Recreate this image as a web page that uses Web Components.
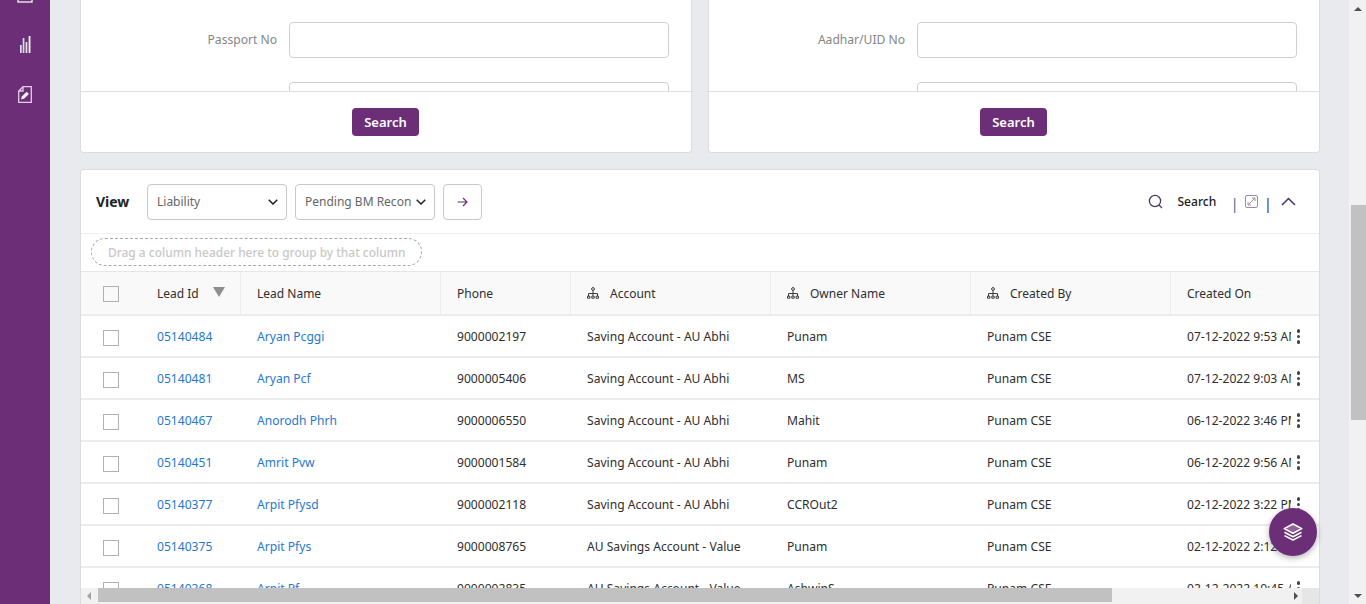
<!DOCTYPE html>
<html lang="en">
<head>
<meta charset="utf-8">
<title>Leads</title>
<style>
  html, body { margin: 0; height: 604px; overflow: hidden; }
  body { font-family: "Noto Sans", "Liberation Sans", sans-serif; font-size: 12px; }
  app-shell { height: 604px; }
</style>
</head>
<body>
<app-shell>
  <search-card label="Passport No"></search-card>
  <search-card label="Aadhar/UID No"></search-card>
  <lead-grid></lead-grid>
</app-shell>

<script>
const FONT = '"Noto Sans", "Liberation Sans", sans-serif';
const PURPLE = '#6c2e77';

const ICONS = {
  report: `<svg width="16" height="3" viewBox="0 0 16 3"><path d="M1 0v2h14V0" fill="none" stroke="#e6dcea" stroke-width="1.5"/></svg>`,
  chart: `<svg width="11" height="17" viewBox="0 0 11 17"><path d="M0 9h1.7v8H0z" fill="#d5e4f7"/><path d="M2.7 2h1.7v15H2.7z" fill="#cfdcf5"/><path d="M5.6 6h1.7v11H5.6z" fill="#f5dfdc"/><path d="M8.6 0h1.9v17H8.6z" fill="#eeeaf8"/></svg>`,
  doc: `<svg width="14" height="17" viewBox="0 0 14 17"><path d="M5 .7h8.3v15.6H.7V5zM5 .7V5H.7" fill="none" stroke="#ddd0e2" stroke-width="1.3"/><path d="M3 13.5l1-3.2 4.6-4.6 2.3 2.3-4.6 4.6z" fill="#f6f0f8"/></svg>`,
  group: `<svg width="12" height="12" viewBox="0 0 12 12" fill="none" stroke="#3a3a3a" stroke-width="1"><circle cx="6" cy="2" r="1.4"/><path d="M6 3.5V7M1.5 9V6.5h9V9M6 7v2"/><path d="M.5 9.2h2.4v2H.5zM4.8 9.2h2.4v2H4.8zM9.1 9.2h2.4v2H9.1z"/></svg>`,
  arrow: `<svg width="11" height="10" viewBox="0 0 11 10" fill="none" stroke="${PURPLE}" stroke-width="1.2"><path d="M.5 5h9.5M6 1l4 4-4 4"/></svg>`,
  chevron: `<svg width="10" height="6" viewBox="0 0 10 6" fill="none" stroke="#222" stroke-width="1.5"><path d="M.7.7L5 5l4.3-4.3"/></svg>`,
  search: `<svg width="15" height="15" viewBox="0 0 15 15" fill="none" stroke="#4a3a6a" stroke-width="1.3"><circle cx="7" cy="7" r="5.6"/><path d="M11 11l3 3"/></svg>`,
  expand: `<svg width="13" height="13" viewBox="0 0 13 13" fill="none"><rect x=".5" y=".5" width="12" height="12" rx="1.5" stroke="#9a8ab4"/><path d="M3 10l7-7M7 3h3v3M3 7v3h3" stroke="#a87d90" stroke-width=".9"/></svg>`,
  up: `<svg width="15" height="9" viewBox="0 0 15 9" fill="none" stroke="#4a2f6d" stroke-width="1.5"><path d="M1 8l6.5-6.5L14 8"/></svg>`,
  layers: `<svg width="20" height="18" viewBox="0 0 20 18" fill="none" stroke="#fff" stroke-width="1.6" stroke-linejoin="round"><path d="M10 1l8.8 4.6L10 10.2 1.2 5.6z" fill="rgba(255,255,255,.25)"/><path d="M1.5 9.3l8.5 4.4 8.5-4.4"/><path d="M1.5 12.6l8.5 4.4 8.5-4.4"/></svg>`,
};

class AppShell extends HTMLElement {
  connectedCallback() {
    if (this.shadowRoot) return;
    const sr = this.attachShadow({ mode: 'open' });
    sr.innerHTML = `
<style>
  :host { display: grid; grid-template-columns: 50px 1fr 17px; height: 604px; background: #e9eaee; overflow: hidden; }
  .side { background: ${PURPLE}; display: flex; flex-direction: column; align-items: center; }
  .side span { display: flex; }
  .i2 { margin-top: 33px; }
  .i3 { margin-top: 33px; }
  main { display: flex; flex-direction: column; gap: 16px; padding: 0 29px 0 30px; min-width: 0; overflow: hidden; }
  .top { display: grid; grid-template-columns: 1fr 1fr; gap: 16px; flex: none; }
  .bar { background: #f1f1f1; display: flex; flex-direction: column; align-items: center; }
  .bar i { border: 4.5px solid transparent; display: block; }
  .bar .u { border-bottom-color: #505050; border-top: 0; margin-top: 7px; }
  .bar .d { border-top-color: #505050; border-bottom: 0; margin: auto 0 6px; }
  .thumb { width: 15px; height: 215px; background: #c1c1c1; margin-top: 194px; align-self: flex-end; }
</style>
<nav class="side">
  <span>${ICONS.report}</span>
  <span class="i2">${ICONS.chart}</span>
  <span class="i3">${ICONS.doc}</span>
</nav>
<main>
  <div class="top"><slot name="cards"></slot></div>
  <slot></slot>
</main>
<aside class="bar"><i class="u"></i><div class="thumb"></div><i class="d"></i></aside>`;
    // the two search cards sit side by side in the top row
    this.querySelectorAll('search-card').forEach(c => c.setAttribute('slot', 'cards'));
  }
}

class SearchCard extends HTMLElement {
  connectedCallback() {
    if (this.shadowRoot) return;
    const sr = this.attachShadow({ mode: 'open' });
    sr.innerHTML = `
<style>
  :host { display: flex; flex-direction: column; height: 153px; box-sizing: border-box; background: #fff; border: 1px solid #dcdcdc; border-top: 0; border-radius: 0 0 4px 4px; font-family: ${FONT}; }
  .body { height: 92px; overflow: hidden; padding: 22px 22px 0 0; box-sizing: border-box; border-bottom: 1px solid #dedede; flex: none; }
  .row { display: grid; grid-template-columns: 196px 1fr; column-gap: 12px; align-items: center; margin-bottom: 24px; }
  label { text-align: right; color: #858585; font-size: 12.1px; padding-bottom: 2px; }
  .inp { height: 36px; box-sizing: border-box; border: 1px solid #cfcfcf; border-radius: 4px; background: #fff; }
  .foot { flex: 1; display: flex; align-items: center; justify-content: center; }
  button { width: 67px; height: 28px; border: 0; border-radius: 4px; background: ${PURPLE}; color: #fff; font: 600 13px ${FONT}; padding: 0; margin-right: 1px; }
</style>
<div class="body">
  <div class="row"><label>${this.getAttribute('label')}</label><div class="inp"></div></div>
  <div class="row"><span></span><div class="inp"></div></div>
</div>
<div class="foot"><button>Search</button></div>`;
  }
}

class LeadGrid extends HTMLElement {
  static COLS = ['60px', '100px', '200px', '130px', '200px', '200px', '200px', '148px'];
  static ROWS = [
    ['05140484', 'Aryan Pcggi', '9000002197', 'Saving Account - AU Abhi', 'Punam', 'Punam CSE', '07-12-2022 9:53 AM'],
    ['05140481', 'Aryan Pcf', '9000005406', 'Saving Account - AU Abhi', 'MS', 'Punam CSE', '07-12-2022 9:03 AM'],
    ['05140467', 'Anorodh Phrh', '9000006550', 'Saving Account - AU Abhi', 'Mahit', 'Punam CSE', '06-12-2022 3:46 PM'],
    ['05140451', 'Amrit Pvw', '9000001584', 'Saving Account - AU Abhi', 'Punam', 'Punam CSE', '06-12-2022 9:56 AM'],
    ['05140377', 'Arpit Pfysd', '9000002118', 'Saving Account - AU Abhi', 'CCROut2', 'Punam CSE', '02-12-2022 3:22 PM'],
    ['05140375', 'Arpit Pfys', '9000008765', 'AU Savings Account - Value', 'Punam', 'Punam CSE', '02-12-2022 2:12 PM'],
    ['05140368', 'Arpit Pf', '9000002835', 'AU Savings Account - Value', 'AshwinS', 'Punam CSE', '02-12-2022 10:45 AM'],
  ];

  connectedCallback() {
    if (this.shadowRoot) return;
    const sr = this.attachShadow({ mode: 'open' });
    const cols = LeadGrid.COLS.join(' ');
    const head = [
      ['Lead Id', false, true], ['Lead Name'], ['Phone'], ['Account', true], ['Owner Name', true], ['Created By', true], ['Created On'],
    ].map(([t, g, s]) => `<div class="th">${g ? `<span class="g">${ICONS.group}</span>` : ''}<span>${t}</span>${s ? '<b class="sort"></b>' : ''}</div>`).join('');
    const rows = LeadGrid.ROWS.map(r => `
  <div class="tr">
    <div class="td c"><span class="cb"></span></div>
    <div class="td link">${r[0]}</div>
    <div class="td link">${r[1]}</div>
    ${r.slice(2, 6).map(v => `<div class="td">${v}</div>`).join('')}
    <div class="td last"><span>${r[6]}</span></div>
    <span class="dots"><i></i><i></i><i></i></span>
  </div>`).join('');
    sr.innerHTML = `
<style>
  :host { display: flex; flex-direction: column; flex: 1; min-height: 0; position: relative; box-sizing: border-box; background: #fff; border: 1px solid #dcdcdc; border-bottom: 0; border-radius: 4px 4px 0 0; font-family: ${FONT}; font-size: 12.1px; color: #2e2e2e; }
  .tools { height: 64px; flex: none; box-sizing: border-box; display: flex; align-items: center; padding: 0 23px 0 15px; border-bottom: 1px solid #f0f0f0; }
  .view { font-weight: 700; font-size: 14px; color: #222; width: 51px; }
  .sel { width: 140px; height: 36px; box-sizing: border-box; border: 1px solid #c8c8c8; border-radius: 4px; display: flex; align-items: center; justify-content: space-between; padding: 0 8px 0 9px; color: #666; margin-right: 8px; white-space: nowrap; font-size: 12px; }
  .go { width: 39px; height: 36px; box-sizing: border-box; border: 1px solid #c8c8c8; border-radius: 4px; display: flex; align-items: center; justify-content: center; }
  .right { margin-left: auto; display: flex; align-items: center; color: #222; font-weight: 500; }
  .right .s { margin-left: 14px; width: 53px; }
  .pipe { color: #4a6ea8; margin: 0 6px 0 0; font-size: 15px; padding-top: 3px; font-weight: 400; }
  .pipe.p2 { color: #4a2f6d; margin: 0 9px 0 6px; }
  .right svg { display: block; }
  .drop { height: 38px; flex: none; box-sizing: border-box; padding: 4px 10px; border-bottom: 1px solid #e6e6e6; }
  .pill { width: 331px; height: 28px; box-sizing: border-box; border: 1px dashed #a8a8a8; border-radius: 14px; display: flex; align-items: center; padding-left: 16px; color: #c8c8c8; font-weight: 500; font-size: 11.95px; white-space: nowrap; }
  .wrap { flex: 1; min-height: 0; overflow: hidden; }
  .thead, .tr { display: grid; grid-template-columns: ${cols}; position: relative; }
  .thead { height: 44px; background: #f9f9f9; border-bottom: 2px solid #ececec; box-sizing: border-box; font-size: 12px; }
  .th { display: flex; align-items: center; padding-left: 16px; border-right: 1px solid #ececec; white-space: nowrap; position: relative; }
  .th:first-child { border-right: 0; padding: 2px 0 0 22px; }
  .th:last-child { border-right: 0; }
  .g { display: flex; margin-right: 11px; }
  .sort { position: absolute; left: 72px; top: 15px; border: 6px solid transparent; border-top: 10px solid #8f8f8f; border-bottom: 0; }
  .tr { height: 42px; border-bottom: 2px solid #ececec; box-sizing: border-box; }
  .td { display: flex; align-items: center; padding-left: 16px; white-space: nowrap; overflow: hidden; }
  .td.c { padding: 4px 0 0 22px; }
  .td.last { width: 104px; }
  .cb { width: 16px; height: 16px; box-sizing: border-box; border: 1px solid #b0b0b0; display: block; }
  .link { color: #1f78d1; }
  .dots { position: absolute; left: 1215.5px; top: 13px; display: flex; flex-direction: column; gap: 2px; }
  .dots i { width: 3.5px; height: 3.5px; border-radius: 50%; background: #444; }
  .hbar { position: absolute; left: 0; right: 0; bottom: 0; height: 16px; background: #f1f1f1; display: flex; align-items: center; }
  .hbar .l { border: 4.5px solid transparent; border-right-color: #a3a3a3; border-left: 0; margin-left: 6px; }
  .hbar .th2 { margin-left: 6.5px; width: 1014px; height: 14px; background: #c1c1c1; align-self: flex-start; }
  .hbar .r { border: 4.5px solid transparent; border-left-color: #505050; border-right: 0; margin-left: auto; margin-right: 4px; }
  .hbar .corner { width: 17px; height: 16px; background: #e6e6e6; }
  .fab { position: absolute; left: 1188px; top: 338px; width: 48px; height: 48px; border-radius: 50%; background: ${PURPLE}; box-shadow: 0 2px 6px rgba(0,0,0,.3); display: flex; align-items: center; justify-content: center; }
</style>
<div class="tools">
  <span class="view">View</span>
  <div class="sel"><span>Liability</span>${ICONS.chevron}</div>
  <div class="sel"><span>Pending BM Recon</span>${ICONS.chevron}</div>
  <div class="go">${ICONS.arrow}</div>
  <div class="right">${ICONS.search}<span class="s">Search</span><span class="pipe">|</span>${ICONS.expand}<span class="pipe p2">|</span>${ICONS.up}</div>
</div>
<div class="drop"><div class="pill">Drag a column header here to group by that column</div></div>
<div class="wrap">
  <div class="thead"><div class="th"><span class="cb"></span></div>${head}</div>
  ${rows}
</div>
<div class="hbar"><i class="l"></i><div class="th2"></div><i class="r"></i><div class="corner"></div></div>
<div class="fab">${ICONS.layers}</div>`;
  }
}

customElements.define('app-shell', AppShell);
customElements.define('search-card', SearchCard);
customElements.define('lead-grid', LeadGrid);
</script>
</body>
</html>
